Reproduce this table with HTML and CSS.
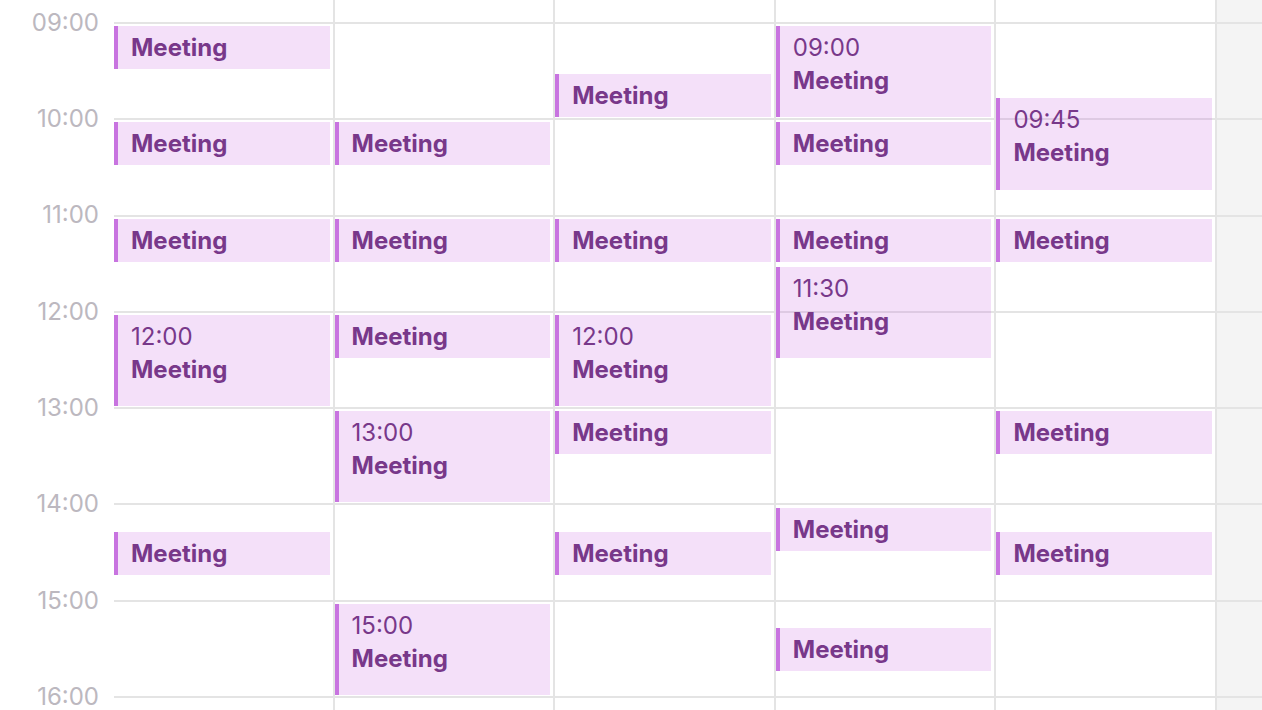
FILE: index.html
```html
<!DOCTYPE html>
<html lang="en">
<head>
    <meta charset="UTF-8">
    <meta name="viewport" content="width=device-width, initial-scale=1.0">
    <title>Week</title>
    <link rel="stylesheet" href="styles.css">
</head>
<body>
    <div class="calendar">
        <div class="gutter">
            <div class="hour-label">09:00</div>
            <div class="hour-label">10:00</div>
            <div class="hour-label">11:00</div>
            <div class="hour-label">12:00</div>
            <div class="hour-label">13:00</div>
            <div class="hour-label">14:00</div>
            <div class="hour-label">15:00</div>
            <div class="hour-label">16:00</div>
        </div>

        <div class="days">
            <!-- Monday -->
            <div class="day first">
                <div class="event" style="--start: 0; --len: .5"><b>Meeting</b></div>
                <div class="event" style="--start: 1; --len: .5"><b>Meeting</b></div>
                <div class="event" style="--start: 2; --len: .5"><b>Meeting</b></div>
                <div class="event" style="--start: 3; --len: 1"><span>12:00</span><b>Meeting</b></div>
                <div class="event" style="--start: 5.25; --len: .5"><b>Meeting</b></div>
            </div>

            <!-- Tuesday -->
            <div class="day">
                <div class="event" style="--start: 1; --len: .5"><b>Meeting</b></div>
                <div class="event" style="--start: 2; --len: .5"><b>Meeting</b></div>
                <div class="event" style="--start: 3; --len: .5"><b>Meeting</b></div>
                <div class="event" style="--start: 4; --len: 1"><span>13:00</span><b>Meeting</b></div>
                <div class="event" style="--start: 6; --len: 1"><span>15:00</span><b>Meeting</b></div>
            </div>

            <!-- Wednesday -->
            <div class="day">
                <div class="event" style="--start: .5; --len: .5"><b>Meeting</b></div>
                <div class="event" style="--start: 2; --len: .5"><b>Meeting</b></div>
                <div class="event" style="--start: 3; --len: 1"><span>12:00</span><b>Meeting</b></div>
                <div class="event" style="--start: 4; --len: .5"><b>Meeting</b></div>
                <div class="event" style="--start: 5.25; --len: .5"><b>Meeting</b></div>
            </div>

            <!-- Thursday -->
            <div class="day">
                <div class="event" style="--start: 0; --len: 1"><span>09:00</span><b>Meeting</b></div>
                <div class="event" style="--start: 1; --len: .5"><b>Meeting</b></div>
                <div class="event" style="--start: 2; --len: .5"><b>Meeting</b></div>
                <div class="event" style="--start: 2.5; --len: 1"><span>11:30</span><b>Meeting</b></div>
                <div class="event" style="--start: 5; --len: .5"><b>Meeting</b></div>
                <div class="event" style="--start: 6.25; --len: .5"><b>Meeting</b></div>
            </div>

            <!-- Friday -->
            <div class="day">
                <div class="event" style="--start: .75; --len: 1"><span>09:45</span><b>Meeting</b></div>
                <div class="event" style="--start: 2; --len: .5"><b>Meeting</b></div>
                <div class="event" style="--start: 4; --len: .5"><b>Meeting</b></div>
                <div class="event" style="--start: 5.25; --len: .5"><b>Meeting</b></div>
            </div>

            <!-- Weekend -->
            <div class="day weekend"></div>
        </div>
    </div>
</body>
</html>
```

FILE: styles.css
```css
body {
    margin: 0;
    font-family: Inter, "Noto Sans", sans-serif;
    background: #fff;
    overflow: hidden;
}
.calendar {
    display: flex;
    height: 710px;
    --hour: 96.3px;
}
.gutter {
    width: 112px;
    flex-shrink: 0;
    box-sizing: border-box;
    padding-right: 13px;
    margin-top: calc(23px - var(--hour) / 2);
}
.hour-label {
    height: var(--hour);
    line-height: var(--hour);
    text-align: right;
    font-size: 24px;
    color: #bcb8bf;
}
.days {
    flex: 1;
    display: grid;
    grid-template-columns: repeat(5, 1fr) 47px;
}
.day {
    position: relative;
    border-left: 2px solid #e4e4e4;
    background-clip: padding-box;
    background-image: repeating-linear-gradient(
        to bottom,
        #e4e4e4 22px,
        #e4e4e4 24px,
        transparent 24px,
        transparent calc(22px + var(--hour))
    );
}
.day.first {
    border-left-color: transparent;
}
.day.weekend {
    background-color: #f4f4f4;
}
.event {
    position: absolute;
    left: 0;
    right: 3px;
    top: calc(var(--start) * var(--hour) + 26px);
    height: calc(var(--len) * var(--hour) - 5px);
    box-sizing: border-box;
    padding: 5px 0 0 13px;
    background: rgba(200, 100, 225, 0.2);
    border-left: 4px solid #c874e0;
    color: #78388a;
    font-size: 24px;
    line-height: 33px;
    overflow: hidden;
}
.event span,
.event b {
    display: block;
    white-space: nowrap;
}
.event b {
    font-weight: 700;
}
```
